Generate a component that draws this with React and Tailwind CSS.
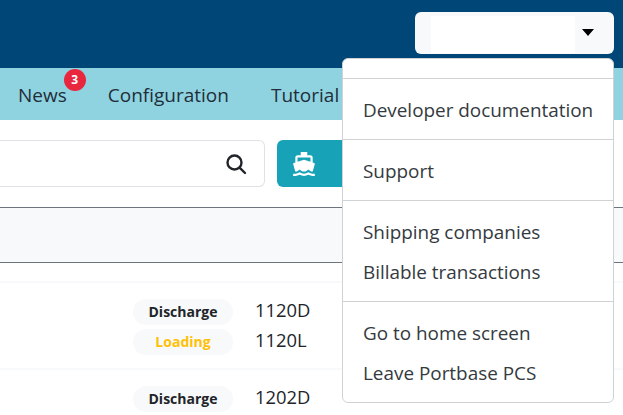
import React from 'react';
import { MdDirectionsBoat } from 'react-icons/md';

const font = { fontFamily: '"Open Sans", "Noto Sans", sans-serif' };

function Divider() {
    return <div className="h-px bg-[#d0d2d4]" />;
}

function MenuItem({ children }) {
    return <div className="h-[40px] px-5 flex items-center text-[#343a40] text-[18.9px] whitespace-nowrap">{children}</div>;
}

function Pill({ children, color }) {
    return (
        <div className={`w-[100px] h-[25.5px] rounded-full bg-[#f8f9fa] flex items-center justify-center text-[14px] font-bold ${color}`}>
            {children}
        </div>
    );
}

function Row({ lines }) {
    return (
        <div className="flex justify-end pr-[310px] pt-[16px] h-[87px] border-t-2 border-[#f8f9fa]">
            <div className="flex flex-col gap-[4.5px]">
                {lines.map((line) => (
                    <div key={line.code} className="flex items-center h-[25.5px]">
                        <Pill color={line.color}>{line.type}</Pill>
                        <span className="ml-[22px] mb-[4px] text-[18.4px] leading-[24px] text-[#212529] w-[58px]">{line.code}</span>
                    </div>
                ))}
            </div>
        </div>
    );
}

export default function App() {
    return (
        <div className="relative w-[623px] h-[415px] overflow-hidden bg-white" style={font}>
            <header className="h-[68px] bg-[#004677] flex justify-end pt-3 pr-[9px]">
                <div className="w-[199px] h-[42px] rounded-md bg-[#f8f9fa] flex pl-4">
                    <div className="w-[144px] h-[37px] mt-[4px] bg-white" />
                    <div className="flex-1 flex items-center pl-[7px] pb-[1px]">
                        <div className="w-0 h-0 border-x-[6px] border-x-transparent border-t-[7px] border-t-black" />
                    </div>
                </div>
            </header>

            <nav className="h-[52px] bg-[#8fd3e0] flex items-center pl-[18px] pt-[2px] text-[19px] text-[#212e3a]">
                <div className="relative mr-[41px]">
                    News
                    <span className="absolute -top-[12px] -right-[19px] w-[22px] h-[22px] rounded-full bg-[#e8273f] text-white text-[12px] font-bold flex items-center justify-center">3</span>
                </div>
                <div className="mr-[42px]">Configuration</div>
                <div>Tutorial</div>
            </nav>

            <div className="h-[87px] flex items-start pt-5">
                <div className="w-[265px] h-[47px] border border-[#dee2e6] border-l-0 rounded-r-md flex items-center justify-end pr-[17px]">
                    <svg width="22" height="22" viewBox="0 0 22 22" fill="none" stroke="#212529" strokeWidth="2.4" strokeLinecap="round">
                        <circle cx="9.5" cy="9.5" r="7" />
                        <path d="M14.8 14.8 L20 20" />
                    </svg>
                </div>
                <div className="ml-3 w-[120px] h-[47px] rounded-l-md bg-[#17a2b8] flex items-center pl-[14px] text-white">
                    <MdDirectionsBoat size={26} />
                </div>
            </div>

            <div className="h-[56px] bg-[#f8f9fa] border-y border-[#6c757d]" />
            <div className="h-[18px]" />

            <Row
                lines={[
                    { type: 'Discharge', code: '1120D', color: 'text-[#212529]' },
                    { type: 'Loading', code: '1120L', color: 'text-[#ffc107]' },
                ]}
            />
            <Row lines={[{ type: 'Discharge', code: '1202D', color: 'text-[#212529]' }]} />

            <div className="absolute left-[342px] top-[58px] w-[272px] h-[345px] bg-white border border-[#d0d2d4] rounded-md">
                <div className="h-[19px]" />
                <Divider />
                <div className="pt-[11px] pb-[9px]"><MenuItem>Developer documentation</MenuItem></div>
                <Divider />
                <div className="pt-[11px] pb-[9px]"><MenuItem>Support</MenuItem></div>
                <Divider />
                <div className="pt-[11px] pb-[9px]">
                    <MenuItem>Shipping companies</MenuItem>
                    <MenuItem>Billable transactions</MenuItem>
                </div>
                <Divider />
                <div className="pt-[11px]">
                    <MenuItem>Go to home screen</MenuItem>
                    <MenuItem>Leave Portbase PCS</MenuItem>
                </div>
            </div>
        </div>
    );
}
